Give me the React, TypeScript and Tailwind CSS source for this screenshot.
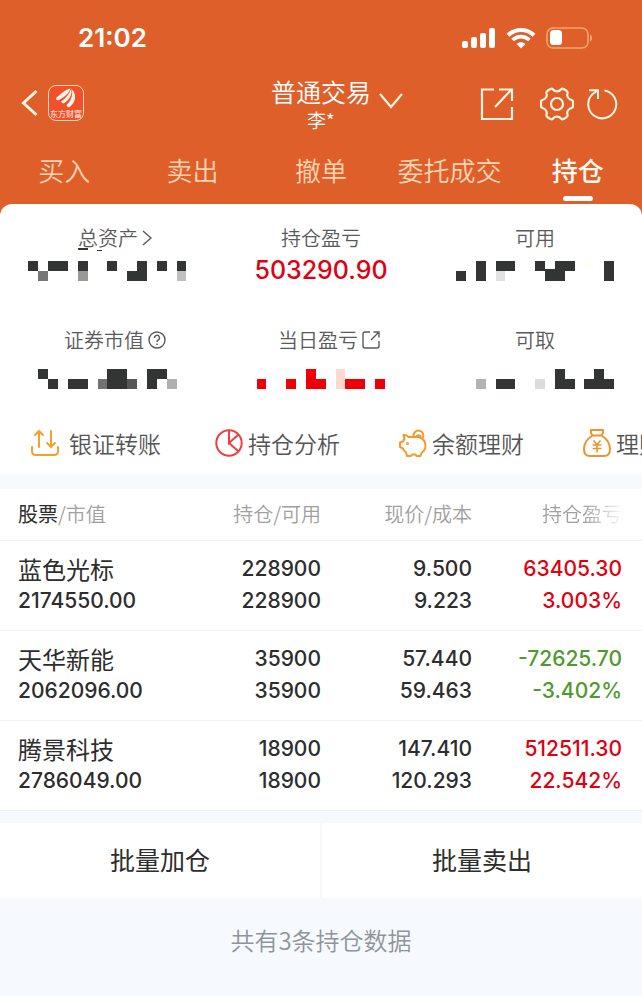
import React, { useState } from "react";
import clsx from "clsx";

type Block = [x: number, y: number, w: number, h: number, color?: string];

const TABS = ["买入", "卖出", "撤单", "委托成交", "持仓"];

// Hidden amounts, drawn as blocks on a 158 x 20 strip
const HIDDEN: Record<string, Block[]> = {
  total: [
    [50, -13, 10, 2],
    [69, -11, 5, 1],
    [0, 0, 10, 10],
    [10, 10, 10, 10, "#777777"],
    [20, 0, 20, 10],
    [50, 0, 10, 10],
    [50, 10, 10, 10, "#999995"],
    [79, 0, 10, 10],
    [109, 0, 10, 10],
    [99, 10, 20, 10],
    [129, 0, 10, 10],
    [149, 0, 9, 10],
    [149, 10, 9, 10, "#bfbfbf"],
  ],
  available: [
    [0, 10, 10, 10],
    [20, 0, 10, 20],
    [40, 0, 19, 10],
    [40, 10, 9, 10, "#e2e2e2"],
    [79, 0, 10, 10],
    [99, 0, 20, 10],
    [89, 8, 10, 2],
    [89, 10, 20, 10],
    [129, 0, 8, 8, "#fffef6"],
    [148, 0, 10, 20],
  ],
  market: [
    [10, 0, 10, 10],
    [20, 10, 10, 10],
    [40, 10, 20, 10],
    [70, 10, 9, 10, "#737373"],
    [79, 0, 20, 20],
    [99, 10, 10, 10, "#555555"],
    [119, 0, 20, 10],
    [119, 10, 10, 10],
    [139, 10, 10, 10, "#b0b0b0"],
  ],
  today: [
    [15, 10, 9, 10],
    [44, 10, 10, 10],
    [64, 0, 10, 20],
    [74, 10, 10, 10],
    [94, 0, 9, 20, "#ffd9cd"],
    [103, 10, 20, 10],
    [133, 10, 10, 10],
  ],
  withdrawable: [
    [20, 10, 10, 10, "#b3b3b3"],
    [40, 10, 19, 10],
    [79, 10, 10, 10, "#dddddd"],
    [99, 0, 10, 20],
    [109, 10, 10, 10],
    [138, 0, 10, 10],
    [128, 10, 30, 10],
  ],
};

const POSITIONS = [
  {
    name: "蓝色光标",
    value: "2174550.00",
    held: "228900",
    usable: "228900",
    price: "9.500",
    cost: "9.223",
    profit: "63405.30",
    rate: "3.003%",
  },
  {
    name: "天华新能",
    value: "2062096.00",
    held: "35900",
    usable: "35900",
    price: "57.440",
    cost: "59.463",
    profit: "-72625.70",
    rate: "-3.402%",
  },
  {
    name: "腾景科技",
    value: "2786049.00",
    held: "18900",
    usable: "18900",
    price: "147.410",
    cost: "120.293",
    profit: "512511.30",
    rate: "22.542%",
  },
];

const Hidden = ({ name, red }: { name: string; red?: boolean }) => (
  <svg
    width="158"
    height="20"
    className={clsx("overflow-visible", red ? "text-[#ee0009]" : "text-[#333434]")}
    shapeRendering="crispEdges"
    aria-hidden="true"
  >
    {HIDDEN[name].map(([x, y, w, h, color], i) => (
      <rect key={i} x={x} y={y} width={w} height={h} fill={color || "currentColor"} />
    ))}
  </svg>
);

const StatusBar = () => (
  <div className="flex h-[76px] items-center justify-between pl-[78px] pr-12">
    <span className="font-['Inter'] text-[26px] font-semibold leading-8">21:02</span>
    <div className="flex items-center gap-[10px]">
      <svg width="34" height="22" viewBox="0 0 34 22" fill="currentColor">
        <rect x="0" y="14" width="6" height="7" rx="2" />
        <rect x="9" y="10" width="6" height="11" rx="2" />
        <rect x="18" y="6" width="6" height="15" rx="2" />
        <rect x="27" y="1" width="6" height="20" rx="2" />
      </svg>
      <svg width="30" height="22" viewBox="0 0 30 22" fill="none" stroke="currentColor">
        <path d="M2 8.2C9.2 1.2 20.8 1.2 28 8.2" strokeWidth="4" />
        <path d="M6.6 13C11.4 8.4 18.6 8.4 23.4 13" strokeWidth="3.8" />
        <path d="M15 21.5L10.6 17C13.1 14.6 16.9 14.6 19.4 17Z" fill="currentColor" stroke="none" />
      </svg>
      <svg width="48" height="22" viewBox="0 0 48 22" fill="none">
        <rect x="1" y="1" width="41" height="20" rx="6" stroke="#f3a56f" strokeWidth="1.6" />
        <path d="M44 7.5C46.8 8.5 46.8 13.5 44 14.5Z" fill="#f3a56f" />
        <rect x="4" y="3" width="12" height="15" rx="3.500" fill="#fff" />
      </svg>
    </div>
  </div>
);

const NavBar = () => (
  <div className="grid h-[60px] grid-cols-3">
    <div className="flex items-center gap-2 pb-[6px] pl-5">
      <button aria-label="返回">
        <svg width="20" height="28" viewBox="0 0 20 28" fill="none" stroke="#fff4e0" strokeWidth="3">
          <path d="M16.5 2L3.5 14L16.5 26" />
        </svg>
      </button>
      <div className="flex size-9 flex-col items-center rounded-lg border border-[#ffd9b8] bg-[#f2502b] pt-[2px]">
        <svg width="20" height="21" viewBox="0 0 20 21" fill="#fff4e6">
          <path d="M0 10C4 7 8 2 14.500 0.500C12.500 6 7 10.500 1.500 12.500Q0 12 0 10Z" />
          <path d="M5 13.500C10 10.500 13 6 15 1C17 6 13 12.500 7.500 15.500Q5.500 15 5 13.500Z" />
          <path d="M10.500 17C15 13.500 17 8 15.800 1.500C21 6 20 15 13 19.500Q11 19 10.500 17Z" />
        </svg>
        <span className="whitespace-nowrap text-[8px] leading-[10px] text-[#fff4e6]">东方财富</span>
      </div>
    </div>
    <div className="flex justify-center gap-2">
      <h1 className="pl-8 text-center font-[350]">
        <span className="block whitespace-nowrap text-[25px] leading-[30px]">普通交易</span>
        <span className="block text-[19px] leading-7">李*</span>
      </h1>
      <button aria-label="切换账户" className="self-start pt-[17px]">
        <svg width="24" height="16" viewBox="0 0 24 16" fill="none" stroke="#fff4e0" strokeWidth="2.200">
          <path d="M1 1L12 14L23 1" />
        </svg>
      </button>
    </div>
    <div className="flex items-center justify-end gap-3 pb-1 pr-6 text-[#fff4e0]">
      <button aria-label="分享" className="mr-[14px]">
        <svg width="34" height="34" viewBox="0 0 34 34" fill="none" stroke="currentColor" strokeWidth="2.200">
          <path d="M14 2.500H2V32H32V20M15 20L31.500 2.500M19 2.500H32V14" />
        </svg>
      </button>
      <button aria-label="设置">
        <svg width="34" height="34" viewBox="0 0 34 34" fill="none" stroke="currentColor" strokeWidth="2.200" strokeLinejoin="round">
          <circle cx="17" cy="17" r="6" />
          <path d="M10.500 2Q12 1.200 13 2.500C15 5 19 5 21 2.500Q22 1.200 23.500 2L26.500 3.800Q28 4.800 27.500 6.500C26.500 9.500 28.500 12 31.500 13Q33 13.500 33 15V19Q33 20.500 31.500 21C28.500 22 26.500 24.500 27.500 27.500Q28 29.200 26.500 30.200L23.500 32Q22 32.800 21 31.500C19 29 15 29 13 31.500Q12 32.800 10.500 32L7.500 30.200Q6 29.200 6.500 27.500C7.500 24.500 5.500 22 2.500 21Q1 20.500 1 19V15Q1 13.500 2.500 13C5.500 12 7.500 9.500 6.500 6.500Q6 4.800 7.500 3.800Z" />
        </svg>
      </button>
      <button aria-label="刷新">
        <svg width="32" height="34" viewBox="0 0 32 34" fill="none" stroke="currentColor" strokeWidth="2">
          <path d="M18.500 3.500A14 14 0 1 1 7 6.800L12 3.200M3 3.200H12V12" />
        </svg>
      </button>
    </div>
  </div>
);

const Metric = ({
  label,
  icon,
  tall,
  children,
}: {
  label: string;
  icon?: React.ReactNode;
  tall?: boolean;
  children: React.ReactNode;
}) => (
  <div className="flex flex-col items-center">
    <div
      className={clsx(
        "flex h-7 items-center gap-1 text-[20px] font-[350] text-[#5a5a5a]",
        icon && "pl-4"
      )}
    >
      {label}
      {icon}
    </div>
    <div className={clsx("flex items-center", tall ? "h-[50px]" : "h-[38px]")}>{children}</div>
  </div>
);

const QUICK_LINKS = [
  {
    label: "银证转账",
    icon: (
      <g stroke="#f5a02c" strokeWidth="2" strokeLinecap="round">
        <path d="M1 18V22Q1 26 5 26H23Q27 26 27 22V18" />
        <path d="M8 18V2M4 6L8 2L12 6M20 2V18M16 14L20 18L24 14" />
      </g>
    ),
  },
  {
    label: "持仓分析",
    icon: (
      <g stroke="#ee3f40" strokeWidth="2">
        <circle cx="14" cy="14" r="12.700" />
        <path d="M14 1.500V14L23.500 5.500M14 14L23 22" />
      </g>
    ),
  },
  {
    label: "余额理财",
    icon: (
      <g stroke="#f39a2d" strokeWidth="2" strokeLinejoin="round">
        <path d="M4.500 6Q8 5.500 9.500 8H19.500Q26.500 10 26.500 17Q26.500 21 22.500 24L21.500 27H17.500L16.500 25.500H13L12 27H8L7 23.500Q4.500 22 4 19.500L1 18V13.500L4 12.500Q4.500 11 5.500 10Z" />
        <path d="M14.500 7.500A5 5 0 1 1 23.500 9.500M17.500 7.500A2.500 2.500 0 0 1 22 8" />
        <circle cx="8.500" cy="14.500" r="0.500" fill="#f39a2d" />
      </g>
    ),
  },
  {
    label: "理财产品",
    icon: (
      <g stroke="#ec9430" strokeWidth="2" strokeLinejoin="round">
        <path d="M8 1H20V4L18.500 6.500H9.500L8 4ZM9.500 6.500C4 10 1 15 1 20Q1 27 7 27H21Q27 27 27 20C27 15 24 10 18.500 6.500" />
        <path d="M10.500 11.500L14 15.500L17.500 11.500M9.500 16H18.500M9.500 19.500H18.500M14 15.500V23.500" strokeWidth="1.600" />
      </g>
    ),
  },
];

const Pair = ({ top, bottom }: { top: string; bottom: string }) => (
  <>
    <span className="block">{top}</span>
    <span className="block">{bottom}</span>
  </>
);

const App = () => {
  const [tab, setTab] = useState("持仓");

  return (
    <div className="min-h-screen overflow-x-hidden bg-[#f6faff] font-['Noto_Sans_CJK_SC',sans-serif] text-[#2d2d2d]">
      <header className="bg-[#de5f2a] text-white">
        <StatusBar />
        <NavBar />
        <nav className="grid h-[68px] grid-cols-5">
          {TABS.map((item) => (
            <button
              key={item}
              onClick={() => setTab(item)}
              className={clsx(
                "flex flex-col items-center whitespace-nowrap pt-4 text-[26px] leading-9",
                tab === item ? "font-medium text-[#fffaf0]" : "font-[350] text-[#ffd3b3]"
              )}
            >
              {item}
              {tab === item && <span className="mt-2 h-[5px] w-[30px] rounded-sm bg-white" />}
            </button>
          ))}
        </nav>
      </header>

      <section className="bg-[#de5f2a]">
        <div className="rounded-t-xl bg-white">
          <div className="grid grid-cols-3 gap-y-9 pt-5">
            <Metric
              label="总资产"
              icon={
                <svg width="10" height="16" viewBox="0 0 10 16" fill="none" stroke="currentColor" strokeWidth="1.500">
                  <path d="M1 1L9 8L1 15" />
                </svg>
              }
            >
              <Hidden name="total" />
            </Metric>
            <Metric label="持仓盈亏">
              <span className="font-['Inter'] text-[25px] font-medium text-[#df0012]">503290.90</span>
            </Metric>
            <Metric label="可用">
              <Hidden name="available" />
            </Metric>
            <Metric
              tall
              label="证券市值"
              icon={
                <svg width="18" height="18" viewBox="0 0 18 18" fill="none" stroke="currentColor" strokeWidth="1.400">
                  <circle cx="9" cy="9" r="8" />
                  <path d="M6.500 7A2.500 2.500 0 1 1 10.200 9Q9 9.600 9 11M9 12.500V14" />
                </svg>
              }
            >
              <Hidden name="market" />
            </Metric>
            <Metric
              tall
              label="当日盈亏"
              icon={
                <svg width="18" height="18" viewBox="0 0 18 18" fill="none" stroke="currentColor" strokeWidth="1.400">
                  <path d="M8 1H3Q1 1 1 3V15Q1 17 3 17H15Q17 17 17 15V10M9 9L17 1M11.500 1H17V6.500" />
                </svg>
              }
            >
              <Hidden name="today" red />
            </Metric>
            <Metric tall label="可取">
              <Hidden name="withdrawable" />
            </Metric>
          </div>

          <div className="mt-2 flex h-[62px] overflow-hidden pl-[31px]">
            {QUICK_LINKS.map((link, i) => (
              <a
                key={link.label}
                href="#"
                className={clsx(
                  "flex w-[184px] shrink-0 items-center whitespace-nowrap text-[23px] font-[350] text-[#555555]",
                  i === 0 ? "gap-[10px]" : "gap-[5px]"
                )}
              >
                <svg width="28" height="28" viewBox="0 0 28 28" fill="none" className="shrink-0">
                  {link.icon}
                </svg>
                {link.label}
              </a>
            ))}
          </div>
        </div>
      </section>

      <table className="mt-[15px] w-full table-fixed bg-white text-right">
        <thead>
          <tr className="h-[51px] border-b border-[#efeff1] text-[20px] text-[#a0a0a0]">
            <th className="w-[28%] pl-[18px] text-left font-[350]">
              <span className="font-normal text-[#2d2d2d]">股票</span>/市值
            </th>
            <th className="w-[22%] font-[350]">持仓/可用</th>
            <th className="w-[151px] font-[350]">现价/成本</th>
            <th className="pr-5 font-[350] [mask-image:linear-gradient(to_right,black_66%,transparent_90%)]">
              持仓盈亏
            </th>
          </tr>
        </thead>
        <tbody className="font-['Inter','Noto_Sans_CJK_SC',sans-serif] text-[21px] font-medium leading-8">
          {POSITIONS.map((p) => (
            <tr key={p.name} className="h-[90px] border-b border-[#f1f1f4]">
              <td className="pl-[18px] text-left">
                <span className="block font-['Noto_Sans_CJK_SC'] text-[24px] font-normal">{p.name}</span>
                <span className="block">{p.value}</span>
              </td>
              <td>
                <Pair top={p.held} bottom={p.usable} />
              </td>
              <td>
                <Pair top={p.price} bottom={p.cost} />
              </td>
              <td className={clsx("pr-5", p.profit.startsWith("-") ? "text-[#4f9a2f]" : "text-[#e0000f]")}>
                <Pair top={p.profit} bottom={p.rate} />
              </td>
            </tr>
          ))}
        </tbody>
      </table>

      <div className="mt-3 grid h-[75px] grid-cols-2 gap-[2px] text-[25px]">
        <button className="bg-white">批量加仓</button>
        <button className="bg-white">批量卖出</button>
      </div>

      <p className="py-6 text-center text-[24px] font-[350] leading-9 text-[#8f9499]">共有3条持仓数据</p>
    </div>
  );
};

export default App;
